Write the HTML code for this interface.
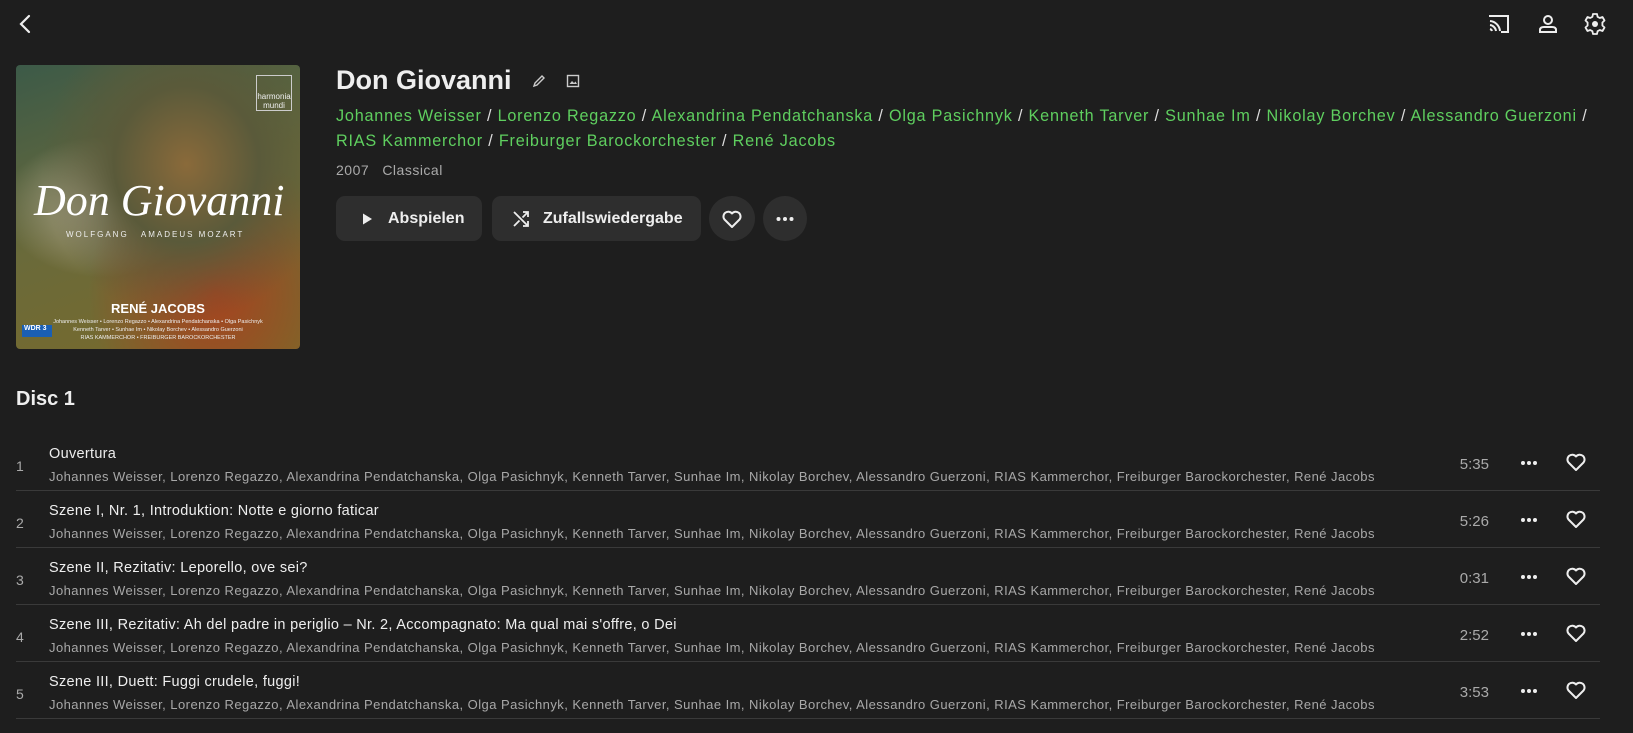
<!DOCTYPE html>
<html><head><meta charset="utf-8"><style>
*{margin:0;padding:0;box-sizing:border-box}
body{width:1633px;height:733px;overflow:hidden;background:#1e1e1e;color:#e8e8e8;font-family:"Liberation Sans",sans-serif;position:relative}
.abs{position:absolute}
svg{display:block}
.green{color:#5fcf5f}
.btn{position:absolute;top:196px;height:45px;background:#2e2e2e;border-radius:9px;display:flex;align-items:center;font-size:16px;font-weight:bold;color:#eee}
.circ{position:absolute;top:196px;width:46px;height:45px;border-radius:50%;background:#2e2e2e;display:flex;align-items:center;justify-content:center}
.row{position:absolute;left:16px;width:1584px;height:57px;border-bottom:1px solid #3a3a3a}
.num{position:absolute;left:0;top:24px;font-size:14px;color:#aaa}
.tt{position:absolute;left:33px;top:12px;font-size:14.5px;color:#eee;letter-spacing:0.3px}
.ta{position:absolute;left:33px;top:35px;font-size:13px;color:#a8a8a8;white-space:nowrap;letter-spacing:0.45px}
.dur{position:absolute;right:111px;top:22px;font-size:15px;color:#aaa}
.dots{position:absolute;left:1503px;top:26px}
.hrt{position:absolute;left:1548px;top:16px}
</style></head><body>
<svg class="abs" style="left:14px;top:12px" width="24" height="24" viewBox="0 0 24 24"><path d="M15 4 L7 12 L15 20" fill="none" stroke="#eee" stroke-width="2.2" stroke-linecap="round"/></svg>
<svg class="abs" style="left:1487px;top:13px" width="24" height="22" viewBox="0 0 24 22"><path d="M3 4 V3 H21 V19 H14 M3 8 A11 11 0 0 1 13 18 M3 12 A7 7 0 0 1 9 18 M3 16 A3 3 0 0 1 5 18" fill="none" stroke="#eee" stroke-width="2"/></svg>
<svg class="abs" style="left:1536px;top:12px" width="24" height="24" viewBox="0 0 24 24"><circle cx="12" cy="8" r="4" fill="none" stroke="#eee" stroke-width="2"/><path d="M4 20 V18 Q4 15 8 15 H16 Q20 15 20 18 V20 Z" fill="none" stroke="#eee" stroke-width="2"/></svg>
<svg class="abs" style="left:1583px;top:12px" width="24" height="24" viewBox="0 0 24 24"><path d="M10 2 H14 L14.6 4.8 L16.8 6 L19.5 5 L21.5 8.5 L19.4 10.5 V13.5 L21.5 15.5 L19.5 19 L16.8 18 L14.6 19.2 L14 22 H10 L9.4 19.2 L7.2 18 L4.5 19 L2.5 15.5 L4.6 13.5 V10.5 L2.5 8.5 L4.5 5 L7.2 6 L9.4 4.8 Z" fill="none" stroke="#eee" stroke-width="1.8" stroke-linejoin="round"/><circle cx="12" cy="12" r="3" fill="#eee"/></svg>

<div class="abs" style="left:16px;top:65px;width:284px;height:284px;border-radius:4px;overflow:hidden;background:radial-gradient(ellipse at 60% 35%,#8a6a3a 0%,#5a5a3a 30%,transparent 60%),radial-gradient(ellipse at 70% 80%,#a8421e 0%,transparent 45%),radial-gradient(ellipse at 30% 50%,#b0a890 0%,transparent 35%),linear-gradient(160deg,#3c5a48,#6a6a3a 50%,#7a6a2a)">
<div class="abs" style="left:240px;top:10px;width:36px;height:36px;border:1px solid #ccc;font-size:8px;color:#eee;padding-top:16px;text-align:center">harmonia mundi</div>
<div class="abs" style="left:18px;top:110px;font-family:'Liberation Serif',serif;font-style:italic;font-size:44px;color:#fff">Don Giovanni</div>
<div class="abs" style="left:50px;top:165px;font-size:8px;letter-spacing:2px;color:#eee">WOLFGANG &nbsp; AMADEUS MOZART</div>
<div class="abs" style="left:0;width:284px;text-align:center;top:236px;font-size:13px;font-weight:bold;color:#fff">RENÉ JACOBS</div>
<div class="abs" style="left:0;width:284px;text-align:center;top:253px;font-size:5.5px;color:#eee;line-height:8px">Johannes Weisser • Lorenzo Regazzo • Alexandrina Pendatchanska • Olga Pasichnyk<br>Kenneth Tarver • Sunhae Im • Nikolay Borchev • Alessandro Guerzoni<br>RIAS KAMMERCHOR • FREIBURGER BAROCKORCHESTER</div>
<div class="abs" style="left:6px;top:260px;width:30px;height:12px;background:#1a5fb4;font-size:7px;color:#fff;font-weight:bold;padding-left:2px">WDR 3</div>
</div>

<div class="abs" style="left:336px;top:65px;font-size:27px;font-weight:bold;color:#eee">Don Giovanni</div>
<svg class="abs" style="left:531px;top:73px" width="16" height="16" viewBox="0 0 16 16"><path d="M3 13 L4 10 L11 3 L13 5 L6 12 Z" fill="none" stroke="#ccc" stroke-width="1.4"/></svg>
<svg class="abs" style="left:565px;top:73px" width="16" height="16" viewBox="0 0 16 16"><rect x="2.5" y="2.5" width="11" height="11" fill="none" stroke="#ccc" stroke-width="1.4"/><path d="M4.5 11 L7 8 L9 10 L10.5 8.5 L12 11Z" fill="#ccc"/></svg>
<div class="abs" style="left:336px;top:104px;font-size:16.2px;line-height:25px;color:#ddd;width:1290px;letter-spacing:0.8px;white-space:nowrap">
<span class="green">Johannes Weisser</span> / <span class="green">Lorenzo Regazzo</span> / <span class="green">Alexandrina Pendatchanska</span> / <span class="green">Olga Pasichnyk</span> / <span class="green">Kenneth Tarver</span> / <span class="green">Sunhae Im</span> / <span class="green">Nikolay Borchev</span> / <span class="green">Alessandro Guerzoni</span> /<br><span class="green">RIAS Kammerchor</span> / <span class="green">Freiburger Barockorchester</span> / <span class="green">René Jacobs</span></div>
<div class="abs" style="left:336px;top:162px;font-size:14px;color:#aaa;letter-spacing:0.5px">2007 &nbsp; Classical</div>

<div class="btn" style="left:336px;width:146px;padding-left:24px"><svg width="14" height="14" viewBox="0 0 14 14" style="margin-right:14px"><path d="M3 1.5 L12 7 L3 12.5Z" fill="#eee"/></svg>Abspielen</div>
<div class="btn" style="left:492px;width:209px;padding-left:19px"><svg width="20" height="20" viewBox="0 0 20 20" style="margin-right:12px"><path d="M3 3 L17 17 M12 3 H17 V8 M3 17 L8.5 11.5 M11.5 8.5 L17 3 M12 17 H17 V12" fill="none" stroke="#eee" stroke-width="1.8"/></svg>Zufallswiedergabe</div>
<div class="circ" style="left:709px"><svg width="24" height="24" viewBox="0 0 24 24"><path d="M12 20 L4.5 12.5 A4.6 4.6 0 0 1 12 6.5 A4.6 4.6 0 0 1 19.5 12.5 Z" fill="none" stroke="#eee" stroke-width="2" stroke-linejoin="round"/></svg></div>
<div class="circ" style="left:763px;width:44px"><svg width="20" height="6" viewBox="0 0 20 6"><circle cx="3.5" cy="3" r="2" fill="#eee"/><circle cx="10" cy="3" r="2" fill="#eee"/><circle cx="16.5" cy="3" r="2" fill="#eee"/></svg></div>

<div class="abs" style="left:16px;top:388px;font-size:20px;font-weight:bold;color:#eee">Disc 1</div>

<div class="row" style="top:434px"><div class="num">1</div><div class="tt">Ouvertura</div><div class="ta">Johannes Weisser, Lorenzo Regazzo, Alexandrina Pendatchanska, Olga Pasichnyk, Kenneth Tarver, Sunhae Im, Nikolay Borchev, Alessandro Guerzoni, RIAS Kammerchor, Freiburger Barockorchester, René Jacobs</div><div class="dur">5:35</div><svg class="dots" width="20" height="6" viewBox="0 0 20 6"><circle cx="4" cy="3" r="2" fill="#eee"/><circle cx="10" cy="3" r="2" fill="#eee"/><circle cx="16" cy="3" r="2" fill="#eee"/></svg><svg class="hrt" width="24" height="24" viewBox="0 0 24 24"><path d="M12 20 L4.5 12.5 A4.6 4.6 0 0 1 12 6.5 A4.6 4.6 0 0 1 19.5 12.5 Z" fill="none" stroke="#eee" stroke-width="2" stroke-linejoin="round"/></svg></div>
<div class="row" style="top:491px"><div class="num">2</div><div class="tt">Szene I, Nr. 1, Introduktion: Notte e giorno faticar</div><div class="ta">Johannes Weisser, Lorenzo Regazzo, Alexandrina Pendatchanska, Olga Pasichnyk, Kenneth Tarver, Sunhae Im, Nikolay Borchev, Alessandro Guerzoni, RIAS Kammerchor, Freiburger Barockorchester, René Jacobs</div><div class="dur">5:26</div><svg class="dots" width="20" height="6" viewBox="0 0 20 6"><circle cx="4" cy="3" r="2" fill="#eee"/><circle cx="10" cy="3" r="2" fill="#eee"/><circle cx="16" cy="3" r="2" fill="#eee"/></svg><svg class="hrt" width="24" height="24" viewBox="0 0 24 24"><path d="M12 20 L4.5 12.5 A4.6 4.6 0 0 1 12 6.5 A4.6 4.6 0 0 1 19.5 12.5 Z" fill="none" stroke="#eee" stroke-width="2" stroke-linejoin="round"/></svg></div>
<div class="row" style="top:548px"><div class="num">3</div><div class="tt">Szene II, Rezitativ: Leporello, ove sei?</div><div class="ta">Johannes Weisser, Lorenzo Regazzo, Alexandrina Pendatchanska, Olga Pasichnyk, Kenneth Tarver, Sunhae Im, Nikolay Borchev, Alessandro Guerzoni, RIAS Kammerchor, Freiburger Barockorchester, René Jacobs</div><div class="dur">0:31</div><svg class="dots" width="20" height="6" viewBox="0 0 20 6"><circle cx="4" cy="3" r="2" fill="#eee"/><circle cx="10" cy="3" r="2" fill="#eee"/><circle cx="16" cy="3" r="2" fill="#eee"/></svg><svg class="hrt" width="24" height="24" viewBox="0 0 24 24"><path d="M12 20 L4.5 12.5 A4.6 4.6 0 0 1 12 6.5 A4.6 4.6 0 0 1 19.5 12.5 Z" fill="none" stroke="#eee" stroke-width="2" stroke-linejoin="round"/></svg></div>
<div class="row" style="top:605px"><div class="num">4</div><div class="tt">Szene III, Rezitativ: Ah del padre in periglio – Nr. 2, Accompagnato: Ma qual mai s'offre, o Dei</div><div class="ta">Johannes Weisser, Lorenzo Regazzo, Alexandrina Pendatchanska, Olga Pasichnyk, Kenneth Tarver, Sunhae Im, Nikolay Borchev, Alessandro Guerzoni, RIAS Kammerchor, Freiburger Barockorchester, René Jacobs</div><div class="dur">2:52</div><svg class="dots" width="20" height="6" viewBox="0 0 20 6"><circle cx="4" cy="3" r="2" fill="#eee"/><circle cx="10" cy="3" r="2" fill="#eee"/><circle cx="16" cy="3" r="2" fill="#eee"/></svg><svg class="hrt" width="24" height="24" viewBox="0 0 24 24"><path d="M12 20 L4.5 12.5 A4.6 4.6 0 0 1 12 6.5 A4.6 4.6 0 0 1 19.5 12.5 Z" fill="none" stroke="#eee" stroke-width="2" stroke-linejoin="round"/></svg></div>
<div class="row" style="top:662px"><div class="num">5</div><div class="tt">Szene III, Duett: Fuggi crudele, fuggi!</div><div class="ta">Johannes Weisser, Lorenzo Regazzo, Alexandrina Pendatchanska, Olga Pasichnyk, Kenneth Tarver, Sunhae Im, Nikolay Borchev, Alessandro Guerzoni, RIAS Kammerchor, Freiburger Barockorchester, René Jacobs</div><div class="dur">3:53</div><svg class="dots" width="20" height="6" viewBox="0 0 20 6"><circle cx="4" cy="3" r="2" fill="#eee"/><circle cx="10" cy="3" r="2" fill="#eee"/><circle cx="16" cy="3" r="2" fill="#eee"/></svg><svg class="hrt" width="24" height="24" viewBox="0 0 24 24"><path d="M12 20 L4.5 12.5 A4.6 4.6 0 0 1 12 6.5 A4.6 4.6 0 0 1 19.5 12.5 Z" fill="none" stroke="#eee" stroke-width="2" stroke-linejoin="round"/></svg></div>
</body></html>
